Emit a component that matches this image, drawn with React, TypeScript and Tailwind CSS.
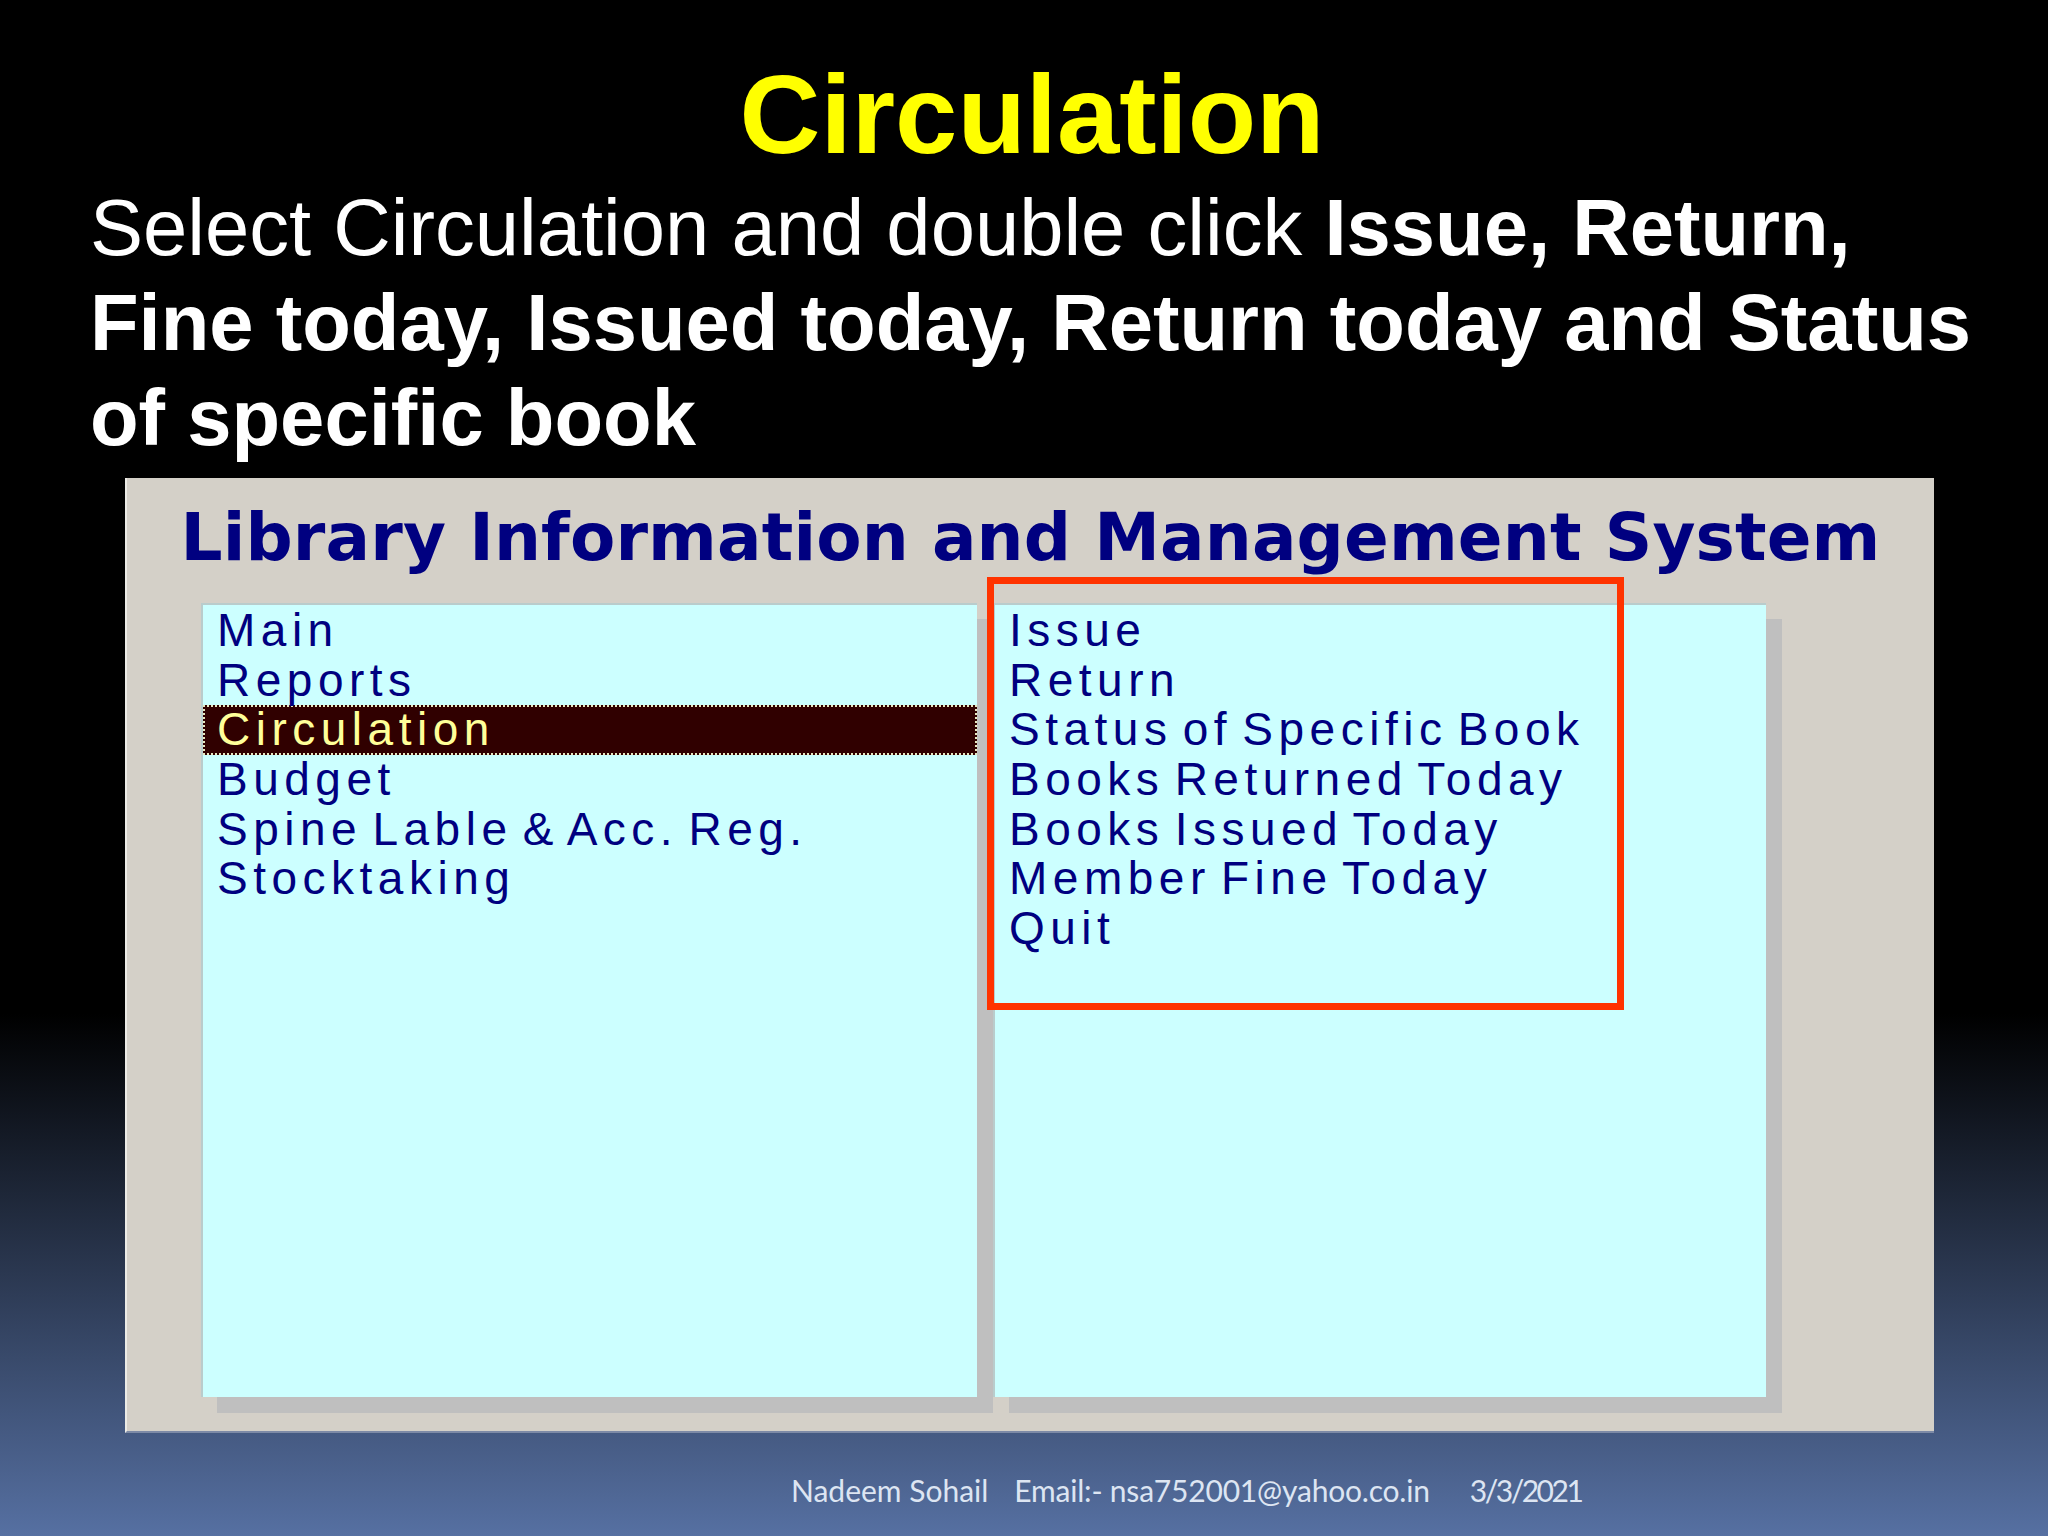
const menu = ['Main', 'Reports', 'Circulation', 'Budget', 'Spine Lable & Acc. Reg.', 'Stocktaking'];

const subMenu = [
  'Issue',
  'Return',
  'Status of Specific Book',
  'Books Returned Today',
  'Books Issued Today',
  'Member Fine Today',
  'Quit',
];

function ListBox({ items, selected }: { items: string[]; selected?: string }) {
  return (
    <div className="h-[794px] border-t-2 border-l-2 border-[#b9cccc] bg-[#ccffff] pt-[1px] shadow-[16px_16px_0_#bfbfbf]">
      {items.map(item =>
        item === selected ? (
          <div
            key={item}
            className="flex h-[49.6px] items-center border-2 border-dotted border-[#e8e8c0] bg-[#300000] pl-[12px] text-[#ffff99]"
          >
            {item}
          </div>
        ) : (
          <div key={item} className="flex h-[49.6px] items-center pl-[14px] text-[#000080]">
            {item}
          </div>
        )
      )}
    </div>
  );
}

export default function App() {
  return (
    <div className="flex h-[1536px] w-[2048px] flex-col overflow-hidden bg-[linear-gradient(to_bottom,#000000_0%,#000000_66%,#5670a2_100%)] font-['Liberation_Sans',Arial,sans-serif]">
      <h1 className="pt-[59px] pl-[16px] text-center text-[112px] leading-none font-bold text-[#ffff00]">
        Circulation
      </h1>

      <p className="mt-[9px] ml-[90px] w-[1920px] text-[79.6px] leading-[95px] text-white">
        Select Circulation and double click{' '}
        <b>Issue, Return, Fine today, Issued today, Return today and Status of specific book</b>
      </p>

      <div className="relative mt-[13px] ml-[125px] h-[955px] w-[1809px] border-l-2 border-[#ecebe6] border-b-2 border-b-[#7d8aa6] bg-[#d4d0c8]">
        <h2 className="pt-[27px] text-center font-['DejaVu_Sans',Verdana,sans-serif] text-[66px] leading-none font-bold tracking-[0.15px] text-[#000080]">
          Library Information and Management System
        </h2>

        <div className="mt-[32px] flex pl-[74px] text-[46px] tracking-[5.5px] [word-spacing:-8px]">
          <div className="w-[776px]">
            <ListBox items={menu} selected="Circulation" />
          </div>
          <div className="ml-[16px] w-[773px]">
            <ListBox items={subMenu} />
          </div>
        </div>

        <div className="absolute top-[99px] left-[860px] h-[433px] w-[637px] border-[7px] border-[#ff3300]" />
      </div>

      <div className="mt-[37px] flex h-[40px] items-center pl-[791px] font-['Lato',sans-serif] text-[30px] text-[#dde5f2]">
        <span>Nadeem Sohail</span>
        <span className="ml-[26px] tracking-[-0.2px]">Email:- nsa752001@yahoo.co.in</span>
        <span className="ml-[40px] tracking-[-2.5px]">3/3/2021</span>
      </div>
    </div>
  );
}
